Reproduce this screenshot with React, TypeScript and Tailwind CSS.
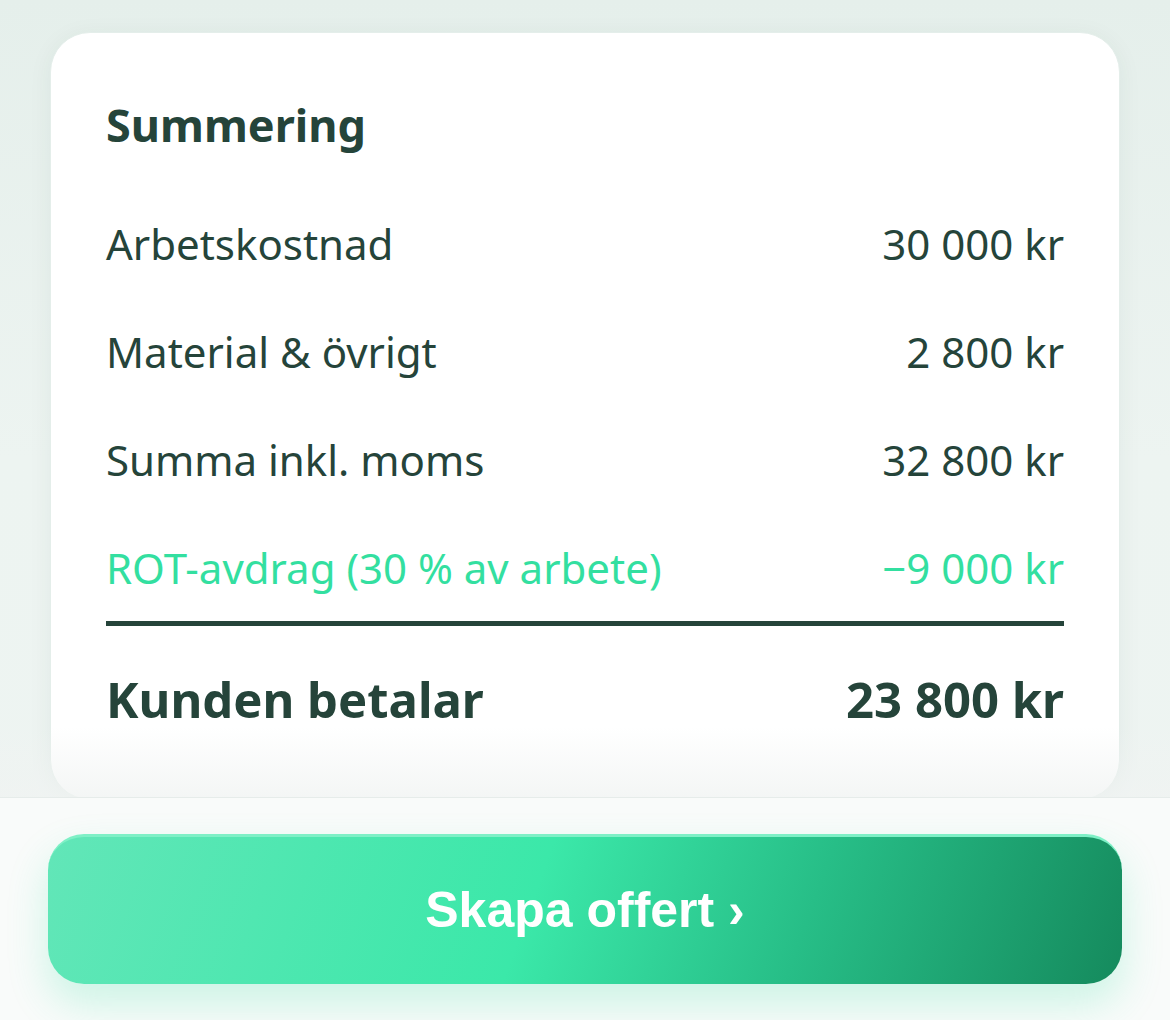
const rows = [
  { label: "Arbetskostnad", value: "30 000 kr" },
  { label: "Material & övrigt", value: "2 800 kr" },
  { label: "Summa inkl. moms", value: "32 800 kr" },
]

export default function App() {
  return (
    <div
      className="relative h-[1020px] overflow-hidden bg-[linear-gradient(180deg,#e5efeb_0%,#edf4f1_45%,#eef4f2_100%)] text-[#25443a]"
      style={{ fontFamily: '"Noto Sans", sans-serif' }}
    >
      <div className="px-[50px] pt-8">
        <div className="rounded-[40px] border border-[#e4eeea] bg-white px-[55px] pb-[70px] pt-[60px] shadow-[0_4px_24px_rgba(37,68,58,0.06)]">
          <h2 className="text-[45px] font-bold leading-[64px]">Summering</h2>

          <div className="mt-[60px] flex flex-col gap-[54px]">
            {rows.map((r) => (
              <div key={r.label} className="flex items-center justify-between text-[42px] leading-[54px]">
                <span>{r.label}</span>
                <span>{r.value}</span>
              </div>
            ))}
            <div className="flex items-center justify-between text-[42px] leading-[54px] text-[#33dfa0]">
              <span>ROT-avdrag (30 % av arbete)</span>
              <span>−9 000 kr</span>
            </div>
          </div>

          <div className="mt-[26px] h-[5px] bg-[#25443a]" />

          <div className="mt-[43px] flex items-center justify-between text-[49px] font-bold leading-[60px]">
            <span>Kunden betalar</span>
            <span>23 800 kr</span>
          </div>
        </div>
      </div>

      <div className="pointer-events-none absolute inset-x-0 bottom-[223px] h-[70px] bg-[linear-gradient(180deg,rgba(240,243,242,0)_0%,rgba(240,243,242,0.75)_100%)]" />

      <div className="absolute inset-x-0 bottom-0 h-[223px] border-t border-[#e6ecea] bg-[#f9fbfa] px-12 pt-[36px]">
        <button
          className="flex h-[150px] w-full items-center justify-center rounded-[36px] border-t-[3px] border-[#7ef0c6] bg-[linear-gradient(110deg,#62e6b8_0%,#3be8a9_45%,#27be87_70%,#158a5d_100%)] text-[50px] font-bold text-white shadow-[0_20px_40px_rgba(46,224,160,0.22)]"
          style={{ fontFamily: '"Liberation Sans", Arial, sans-serif' }}
        >
          Skapa offert ›
        </button>
      </div>
    </div>
  )
}
